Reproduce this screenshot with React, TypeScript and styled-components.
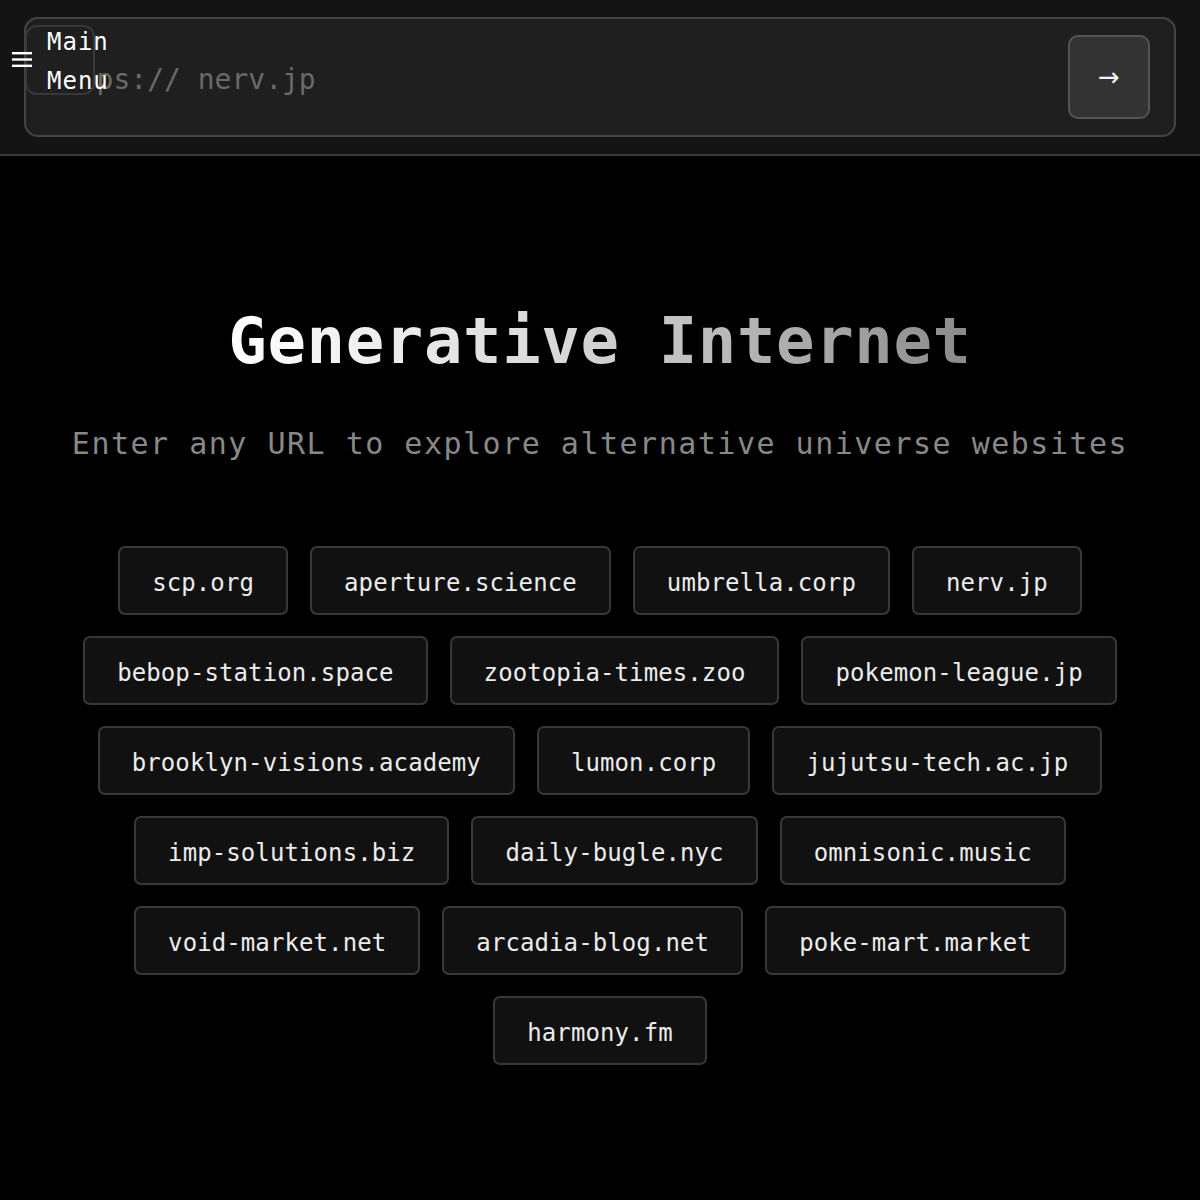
import React from "react";
import styled, { createGlobalStyle } from "styled-components";

const Global = createGlobalStyle`
  html, body { margin: 0; padding: 0; background: #000; }
  body { font-family: "DejaVu Sans Mono", "Liberation Mono", monospace; color: #eee; }
  * { box-sizing: border-box; }
`;

const Page = styled.div`
  min-height: 1200px;
  background: #000;
`;

const Header = styled.header`
  position: relative;
  background: #141414;
  border-bottom: 2px solid #3a3a3a;
  padding: 17px 24px 17px;
`;

const UrlBox = styled.form`
  display: flex;
  align-items: center;
  height: 120px;
  background: #1f1f1f;
  border: 2px solid #454545;
  border-radius: 14px;
  padding: 16px 24px 16px 20px;
`;

const Prefix = styled.span`
  margin-top: 5px;
  font-size: 28px;
  color: #6a6a6a;
  white-space: pre;
`;

const UrlInput = styled.input`
  margin-top: 5px;
  flex: 1;
  min-width: 0;
  background: transparent;
  border: none;
  outline: none;
  font-family: inherit;
  font-size: 28px;
  color: #ddd;
  padding: 0;
  &::placeholder { color: #6a6a6a; }
`;

const GoButton = styled.button`
  width: 82px;
  height: 84px;
  display: flex;
  align-items: center;
  justify-content: center;
  background: #333;
  border: 2px solid #555;
  border-radius: 10px;
  color: #f2f2f2;
  font-family: "DejaVu Sans", sans-serif;
  font-size: 26px;
  padding: 0;
`;

const MenuButton = styled.button`
  position: absolute;
  left: 25px;
  top: 25px;
  width: 70px;
  height: 70px;
  background: #1f1f1f;
  border: 2px solid #383838;
  border-radius: 12px;
  padding: 0;
`;

const MenuIcon = styled.svg`
  position: absolute;
  left: 12px;
  top: 52px;
`;

const MenuLabel = styled.span`
  position: absolute;
  left: 47px;
  top: 23px;
  width: 60px;
  font-size: 24px;
  line-height: 39px;
  letter-spacing: 1px;
  color: #fff;
  pointer-events: none;
`;

const Main = styled.main`
  display: flex;
  flex-direction: column;
  align-items: center;
  padding-top: 147px;
`;

const Title = styled.h1`
  margin: 0;
  font-size: 64px;
  line-height: 1.2;
  font-weight: 700;
  letter-spacing: 0.6px;
  background: linear-gradient(90deg, #ffffff 0%, #d8d8d8 45%, #8a8a8a 100%);
  -webkit-background-clip: text;
  background-clip: text;
  color: transparent;
`;

const Subtitle = styled.p`
  margin: 43px 0 0;
  font-size: 30px;
  line-height: 42px;
  letter-spacing: 1.5px;
  color: #888;
`;

const Chips = styled.div`
  margin-top: 81px;
  max-width: 1100px;
  display: flex;
  flex-wrap: wrap;
  justify-content: center;
  gap: 21px 22px;
`;

const Chip = styled.button`
  height: 69px;
  padding: 5px 32px 0;
  display: flex;
  align-items: center;
  background: #111;
  border: 2px solid #383838;
  border-radius: 7px;
  font-family: "DejaVu Sans Mono", "Liberation Mono", monospace;
  font-size: 24px;
  letter-spacing: 0.1px;
  color: #ececec;
`;

const sites = [
  "scp.org",
  "aperture.science",
  "umbrella.corp",
  "nerv.jp",
  "bebop-station.space",
  "zootopia-times.zoo",
  "pokemon-league.jp",
  "brooklyn-visions.academy",
  "lumon.corp",
  "jujutsu-tech.ac.jp",
  "imp-solutions.biz",
  "daily-bugle.nyc",
  "omnisonic.music",
  "void-market.net",
  "arcadia-blog.net",
  "poke-mart.market",
  "harmony.fm",
];

export default function App() {
  return (
    <Page>
      <Global />
      <Header>
        <UrlBox onSubmit={(e) => e.preventDefault()}>
          <Prefix>https:// </Prefix>
          <UrlInput placeholder="nerv.jp" />
          <GoButton type="submit">→</GoButton>
        </UrlBox>
        <MenuButton aria-label="Main Menu" />
        <MenuIcon width="20" height="16" viewBox="0 0 20 16">
          <rect x="0" y="0" width="20" height="2.4" fill="#fff" />
          <rect x="0" y="6.3" width="20" height="2.4" fill="#fff" />
          <rect x="0" y="12.6" width="20" height="2.4" fill="#fff" />
        </MenuIcon>
        <MenuLabel>Main Menu</MenuLabel>
      </Header>
      <Main>
        <Title>Generative Internet</Title>
        <Subtitle>Enter any URL to explore alternative universe websites</Subtitle>
        <Chips>
          {sites.map((s) => (
            <Chip key={s}>{s}</Chip>
          ))}
        </Chips>
      </Main>
    </Page>
  );
}
